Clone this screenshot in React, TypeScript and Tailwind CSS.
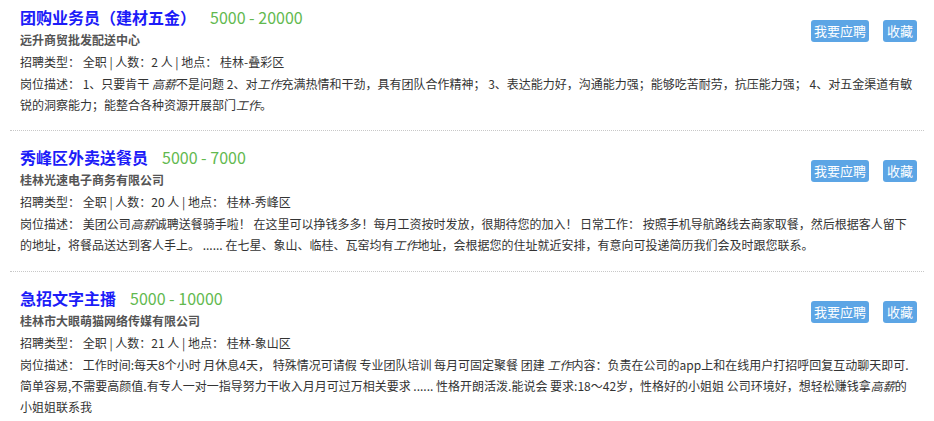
type Job = {
  title: string
  salary: string
  company: string
  count: string
  place: string
  desc: React.ReactNode[]
}

const I = ({ children }: { children: React.ReactNode }) => <em className="italic">{children}</em>

const jobs: Job[] = [
  {
    title: "团购业务员（建材五金）",
    salary: "5000 - 20000",
    company: "远升商贸批发配送中心",
    count: "2",
    place: "桂林-叠彩区",
    desc: [
      <>岗位描述： 1、只要肯干 <I>高薪</I>不是问题 2、对<I>工作</I>充满热情和干劲，具有团队合作精神； 3、表达能力好，沟通能力强；能够吃苦耐劳，抗压能力强； 4、对五金渠道有敏</>,
      <>锐的洞察能力；能整合各种资源开展部门<I>工作</I>。</>,
    ],
  },
  {
    title: "秀峰区外卖送餐员",
    salary: "5000 - 7000",
    company: "桂林光速电子商务有限公司",
    count: "20",
    place: "桂林-秀峰区",
    desc: [
      <>岗位描述： 美团公司<I>高薪</I>诚聘送餐骑手啦！ 在这里可以挣钱多多！每月工资按时发放，很期待您的加入！ 日常工作： 按照手机导航路线去商家取餐，然后根据客人留下</>,
      <>的地址，将餐品送达到客人手上。 ...... 在七星、象山、临桂、瓦窑均有<I>工作</I>地址，会根据您的住址就近安排，有意向可投递简历我们会及时跟您联系。</>,
    ],
  },
  {
    title: "急招文字主播",
    salary: "5000 - 10000",
    company: "桂林市大眼萌猫网络传媒有限公司",
    count: "21",
    place: "桂林-象山区",
    desc: [
      <>岗位描述： 工作时间:每天8个小时 月休息4天， 特殊情况可请假 专业团队培训 每月可固定聚餐 团建 <I>工作</I>内容：负责在公司的app上和在线用户打招呼回复互动聊天即可.</>,
      <>简单容易,不需要高颜值.有专人一对一指导努力干收入月月可过万相关要求 ...... 性格开朗活泼.能说会 要求:18～42岁，性格好的小姐姐 公司环境好，想轻松赚钱拿<I>高薪</I>的</>,
      <>小姐姐联系我</>,
    ],
  },
]

const App = () => {
  return (
    <div
      className="h-screen overflow-hidden bg-white px-[10px] text-[#333]"
      style={{ fontFamily: '"Noto Sans CJK SC", "Noto Sans", sans-serif' }}
    >
      {jobs.map((job, i) => (
        <div
          key={job.title}
          className={
            i === 0
              ? "px-[10px] pt-[5px] pb-[15px] border-b border-dotted border-[#c8c8c8]"
              : "px-[10px] pt-[14px] pb-[16px] border-b border-dotted border-[#c8c8c8]"
          }
        >
          <div className="float-right -mr-[3px] mt-[15px] flex gap-[14px]">
            <button className="h-[22px] rounded-[3px] bg-[#5ca5e5] px-[3px] text-[13px] leading-[22px] text-white">
              我要应聘
            </button>
            <button className="h-[22px] rounded-[3px] bg-[#5ca5e5] px-[4px] text-[13px] leading-[22px] text-white">
              收藏
            </button>
          </div>
          <div className="flex items-baseline h-[24px]">
            <span className="text-[16px] font-bold leading-[24px] text-[#1c1cf8]">{job.title}</span>
            <span className="ml-[14px] text-[16px] leading-[24px] text-[#62b94f]">{job.salary}</span>
          </div>
          <div className="text-[12px] font-bold leading-[22px] text-[#555]">{job.company}</div>
          <div className="text-[12px] leading-[22px]">
            招聘类型： 全职 | 人数：{job.count} 人 | 地点： {job.place}
          </div>
          <div className="text-[12px] leading-[21px]">
            {job.desc.map((line, j) => (
              <div key={j} className="whitespace-nowrap">{line}</div>
            ))}
          </div>
        </div>
      ))}
    </div>
  )
}

export default App
